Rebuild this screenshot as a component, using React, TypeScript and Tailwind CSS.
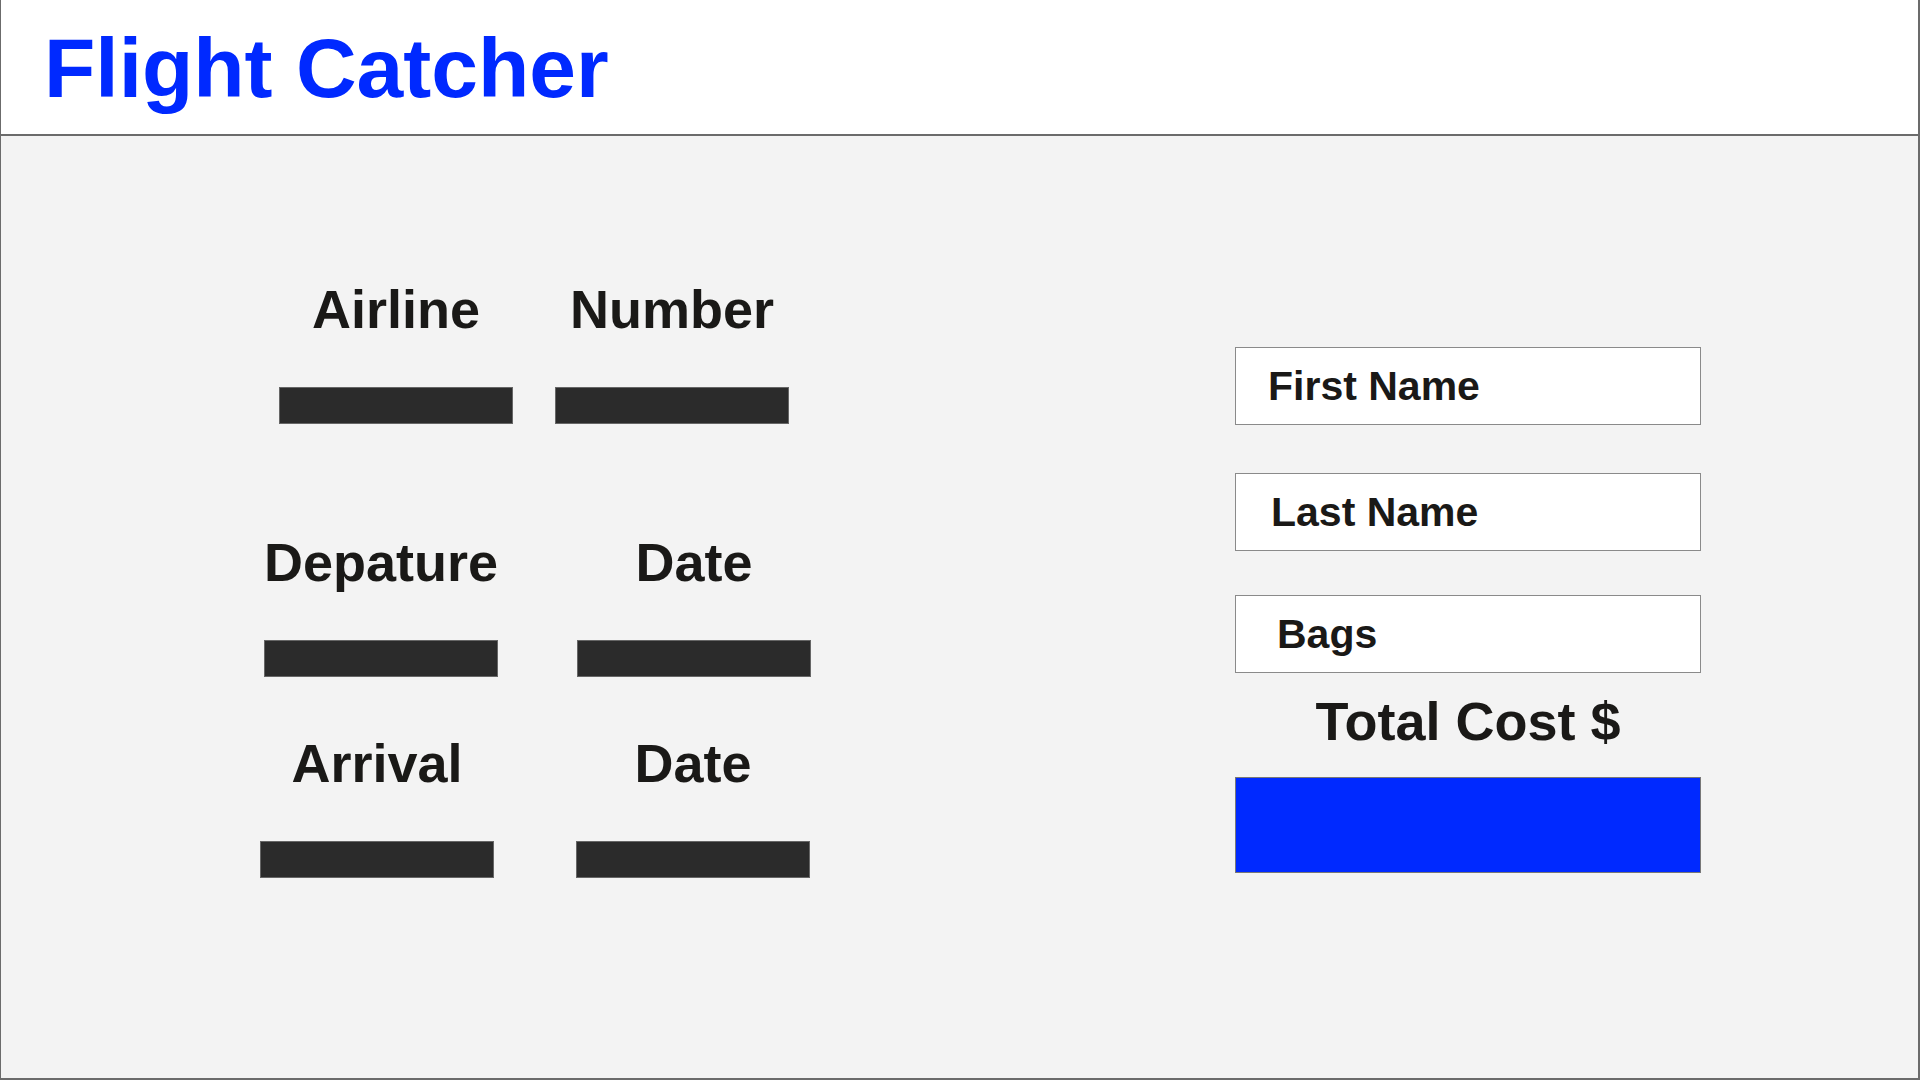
import React from 'react';

const font = { fontFamily: '"Liberation Sans", Arial, sans-serif' };

type FieldProps = {
  label: string;
};

const Field = ({ label }: FieldProps) => {
  return (
    <div className="flex flex-col items-center w-[234px]">
      <span className="text-[54px] leading-none font-bold text-[#1a1917] whitespace-nowrap">
        {label}
      </span>
      <div className="mt-[51px] w-[234px] h-[37px] bg-[#2b2b2b] border border-[#666666]" />
    </div>
  );
};

type InputBoxProps = {
  label: string;
  pad: string;
  className?: string;
};

const InputBox = ({ label, pad, className = '' }: InputBoxProps) => {
  return (
    <div
      className={`w-[466px] h-[78px] bg-white border border-[#8a8a8a] flex items-center ${pad} ${className}`}
    >
      <span className="text-[41px] leading-none font-bold text-[#1a1917]">
        {label}
      </span>
    </div>
  );
};

const App = () => {
  return (
    <div
      style={font}
      className="w-[1920px] h-[1080px] flex flex-col bg-[#f3f3f3] border-l border-r-2 border-b-2 border-[#6b6b6b] overflow-hidden"
    >
      {/* Header */}
      <header className="h-[136px] shrink-0 bg-white border-b-2 border-[#6b6b6b] pt-[26px] pl-[43px]">
        <h1 className="text-[84px] leading-none font-bold text-[#0029ff]">
          Flight Catcher
        </h1>
      </header>

      {/* Body */}
      <main className="flex flex-1">
        {/* Flight details */}
        <section className="w-[1234px] shrink-0 pt-[146px]">
          <div className="flex ml-[278px] gap-[42px]">
            <Field label="Airline" />
            <Field label="Number" />
          </div>
          <div className="flex ml-[263px] gap-[79px] mt-[111px]">
            <Field label="Depature" />
            <Field label="Date" />
          </div>
          <div className="flex ml-[259px] gap-[82px] mt-[59px]">
            <Field label="Arrival" />
            <Field label="Date" />
          </div>
        </section>

        {/* Passenger details */}
        <section className="flex flex-col pt-[211px]">
          <InputBox label="First Name" pad="pl-[32px]" />
          <InputBox label="Last Name" pad="pl-[35px]" className="mt-[48px]" />
          <InputBox label="Bags" pad="pl-[41px]" className="mt-[44px]" />
          <div className="w-[466px] flex justify-center mt-[21px]">
            <span className="text-[54px] leading-none font-bold text-[#1a1917]">
              Total Cost $
            </span>
          </div>
          <div className="mt-[29px] w-[466px] h-[96px] bg-[#0029ff] border border-[#777777]" />
        </section>
      </main>
    </div>
  );
};

export default App;
